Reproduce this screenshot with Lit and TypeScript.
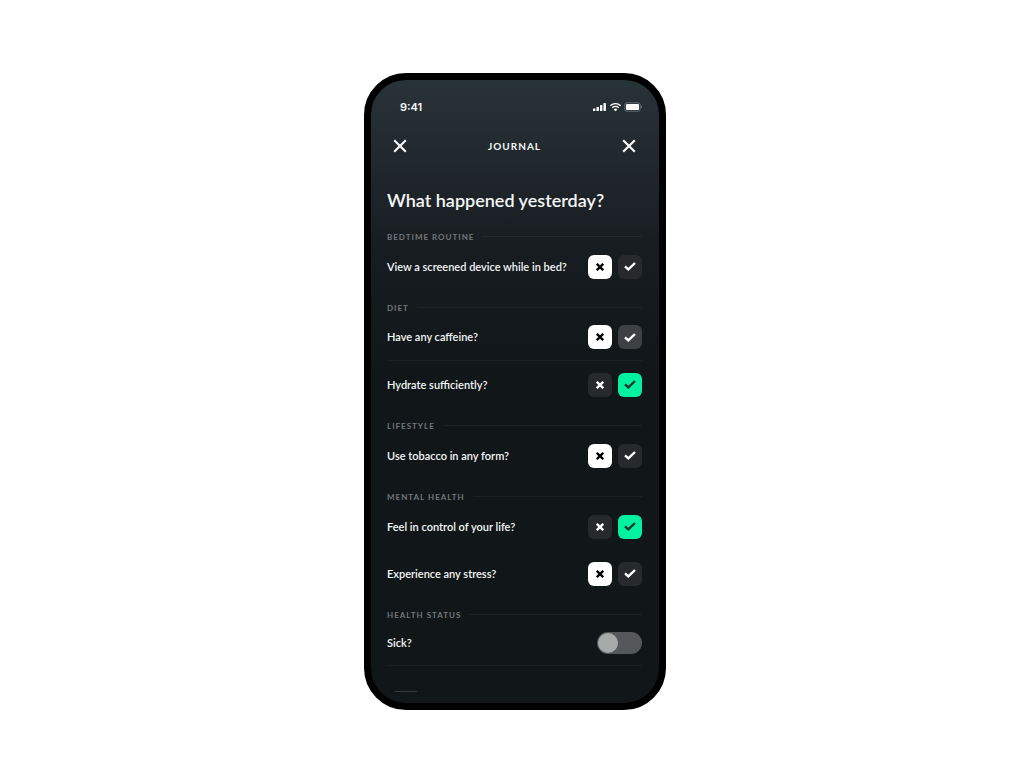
import { LitElement, html, css, svg } from "lit";
import { customElement, state } from "lit/decorators.js";
import { classMap } from "lit/directives/class-map.js";

type Answer = "yes" | "no";

interface Question {
  text: string;
  answer: Answer;
  divided?: boolean;
  lit?: boolean;
}

interface Section {
  title: string;
  questions: Question[];
}

const closeIcon = html`<svg class="close-icon" viewBox="0 0 14 14" aria-hidden="true">
  ${svg`<path d="M1.2 1.2 12.8 12.8M12.8 1.2 1.2 12.8" fill="none" stroke="currentColor" stroke-width="2.2"/>`}
</svg>`;

const crossIcon = html`<svg class="cross-icon" viewBox="0 0 8 8" aria-hidden="true">
  ${svg`<path d="M.8.8 7.2 7.2M7.2.8.8 7.2" fill="none" stroke="currentColor" stroke-width="2.3"/>`}
</svg>`;

const checkIcon = html`<svg class="check-icon" viewBox="0 0 12 9" aria-hidden="true">
  ${svg`<path d="M1 4.4 4.3 7.4 11 1" fill="none" stroke="currentColor" stroke-width="2.4"/>`}
</svg>`;

@customElement("app-root")
export class AppRoot extends LitElement {
  @state() private sick = false;

  @state() private sections: Section[] = [
    {
      title: "Bedtime routine",
      questions: [{ text: "View a screened device while in bed?", answer: "no" }],
    },
    {
      title: "Diet",
      questions: [
        { text: "Have any caffeine?", answer: "no", divided: true, lit: true },
        { text: "Hydrate sufficiently?", answer: "yes" },
      ],
    },
    {
      title: "Lifestyle",
      questions: [{ text: "Use tobacco in any form?", answer: "no" }],
    },
    {
      title: "Mental health",
      questions: [
        { text: "Feel in control of your life?", answer: "yes" },
        { text: "Experience any stress?", answer: "no" },
      ],
    },
  ];

  static styles = css`
    :host {
      display: flex;
      align-items: center;
      justify-content: center;
      min-height: 100vh;
      background: #fff;
      color: #f4f6f7;
      font-family: Lato, "Open Sans", sans-serif;
      font-size: 11px;
      font-weight: 600;
    }
    * {
      box-sizing: border-box;
    }
    h1,
    h2,
    p {
      margin: 0;
    }
    button {
      display: flex;
      align-items: center;
      justify-content: center;
      padding: 0;
      border: 0;
      background: none;
      color: inherit;
      cursor: pointer;
    }
    svg {
      display: block;
    }
    .phone {
      width: 302px;
      max-width: 100%;
      padding: 17px 17px 11px 16px;
      border: 7px solid #000;
      border-radius: 42px;
      background: linear-gradient(#283337 0, #20272c 90px, #171c20 170px, #111619 300px);
      overflow: hidden;
    }
    .status {
      display: flex;
      align-items: center;
      justify-content: space-between;
      height: 20px;
      padding-left: 13px;
      font-family: Inter, sans-serif;
      font-size: 11px;
      line-height: 20px;
    }
    .indicators {
      width: 50px;
      height: 10px;
    }
    .nav {
      display: flex;
      align-items: center;
      justify-content: space-between;
      height: 58px;
      padding: 0 4px;
    }
    .close {
      width: 18px;
      height: 24px;
    }
    .close-icon {
      width: 14px;
      height: 14px;
    }
    .nav-title {
      font-size: 10px;
      font-weight: 700;
      letter-spacing: 1px;
      line-height: 12px;
      text-transform: uppercase;
    }
    .heading {
      padding: 13px 0 18px;
      font-size: 18px;
      font-weight: 600;
      line-height: 24px;
      white-space: nowrap;
    }
    .sections {
      display: grid;
      gap: 11px;
    }
    .section-title {
      display: flex;
      align-items: center;
      gap: 8px;
      height: 13px;
      color: #73787c;
      font-size: 8px;
      font-weight: 700;
      letter-spacing: 1px;
      text-transform: uppercase;
    }
    .section-title::after {
      content: "";
      flex: 1;
      height: 1px;
      background: #ffffff0d;
    }
    .row {
      display: flex;
      align-items: center;
      justify-content: space-between;
      height: 47px;
      line-height: 16px;
      white-space: nowrap;
    }
    .divided {
      border-bottom: 1px solid #ffffff0a;
    }
    .toggle-row {
      height: 45px;
    }
    .answers {
      display: flex;
      gap: 6px;
    }
    .answer {
      width: 24px;
      height: 24px;
      border-radius: 6px;
      background: #272a2d;
      color: #fff;
    }
    .bright {
      background: #3e4143;
    }
    .chosen-no {
      background: #fff;
      color: #000;
    }
    .chosen-yes {
      background: #00f19f;
      color: #12372c;
    }
    .cross-icon {
      width: 8px;
      height: 8px;
    }
    .check-icon {
      width: 12px;
      height: 9px;
    }
    .switch {
      appearance: none;
      display: flex;
      width: 45px;
      height: 22px;
      margin: 0;
      padding: 1px;
      border-radius: 11px;
      background: #54585a;
      cursor: pointer;
    }
    .switch::before {
      content: "";
      width: 20px;
      height: 20px;
      border-radius: 50%;
      background: #a6aaa9;
    }
    .switch:checked {
      justify-content: flex-end;
      background: #00f19f;
    }
    .more {
      width: 22px;
      height: 1px;
      margin: 25px 0 0 8px;
      background: #34393c;
    }
  `;

  private choose(question: Question, answer: Answer) {
    question.answer = answer;
    this.sections = [...this.sections];
  }

  private renderQuestion(q: Question) {
    return html`<div class=${classMap({ row: true, divided: !!q.divided })}>
      <p>${q.text}</p>
      <div class="answers" role="group" aria-label=${q.text}>
        <button
          class=${classMap({ answer: true, "chosen-no": q.answer === "no" })}
          aria-label="No"
          aria-pressed=${q.answer === "no"}
          @click=${() => this.choose(q, "no")}
        >${crossIcon}</button>
        <button
          class=${classMap({ answer: true, bright: !!q.lit, "chosen-yes": q.answer === "yes" })}
          aria-label="Yes"
          aria-pressed=${q.answer === "yes"}
          @click=${() => this.choose(q, "yes")}
        >${checkIcon}</button>
      </div>
    </div>`;
  }

  render() {
    return html`<main class="phone">
      <div class="status">
        <span>9:41</span>
        <svg class="indicators" viewBox="0 0 50 10" aria-hidden="true">
          <g fill="#fff">
            <rect x="1" y="6.5" width="2.4" height="2.5" rx=".6" />
            <rect x="4.5" y="5" width="2.4" height="4" rx=".6" />
            <rect x="8" y="3" width="2.4" height="6" rx=".6" />
            <rect x="11.5" y="1" width="2.4" height="8" rx=".6" />
            <rect x="34" y="2" width="13" height="6" rx="1" />
            <path d="M49.3 3.6c1 .4 1 2.4 0 2.8z" opacity=".5" />
            <path d="M23.5 9.3 21.7 7.4a2.6 2.6 0 0 1 3.6 0z" />
          </g>
          <rect x="32.8" y=".8" width="15.4" height="8.4" rx="2" fill="none" stroke="#fff" stroke-opacity=".4" stroke-width=".7" />
          <path d="M18.4 3.7a7.4 7.4 0 0 1 10.2 0M20.3 5.7a4.7 4.7 0 0 1 6.4 0" fill="none" stroke="#fff" stroke-width="1.4" />
        </svg>
      </div>
      <header class="nav">
        <button class="close" aria-label="Back">${closeIcon}</button>
        <p class="nav-title">Journal</p>
        <button class="close" aria-label="Close">${closeIcon}</button>
      </header>
      <h1 class="heading">What happened yesterday?</h1>
      <div class="sections">
        ${this.sections.map(
          (s) => html`<section>
            <h2 class="section-title">${s.title}</h2>
            ${s.questions.map((q) => this.renderQuestion(q))}
          </section>`
        )}
        <section>
          <h2 class="section-title">Health status</h2>
          <div class="row toggle-row divided">
            <label for="sick">Sick?</label>
            <input
              id="sick"
              class="switch"
              type="checkbox"
              role="switch"
              .checked=${this.sick}
              @change=${(e: Event) => (this.sick = (e.target as HTMLInputElement).checked)}
            />
          </div>
        </section>
      </div>
      <div class="more"></div>
    </main>`;
  }
}
